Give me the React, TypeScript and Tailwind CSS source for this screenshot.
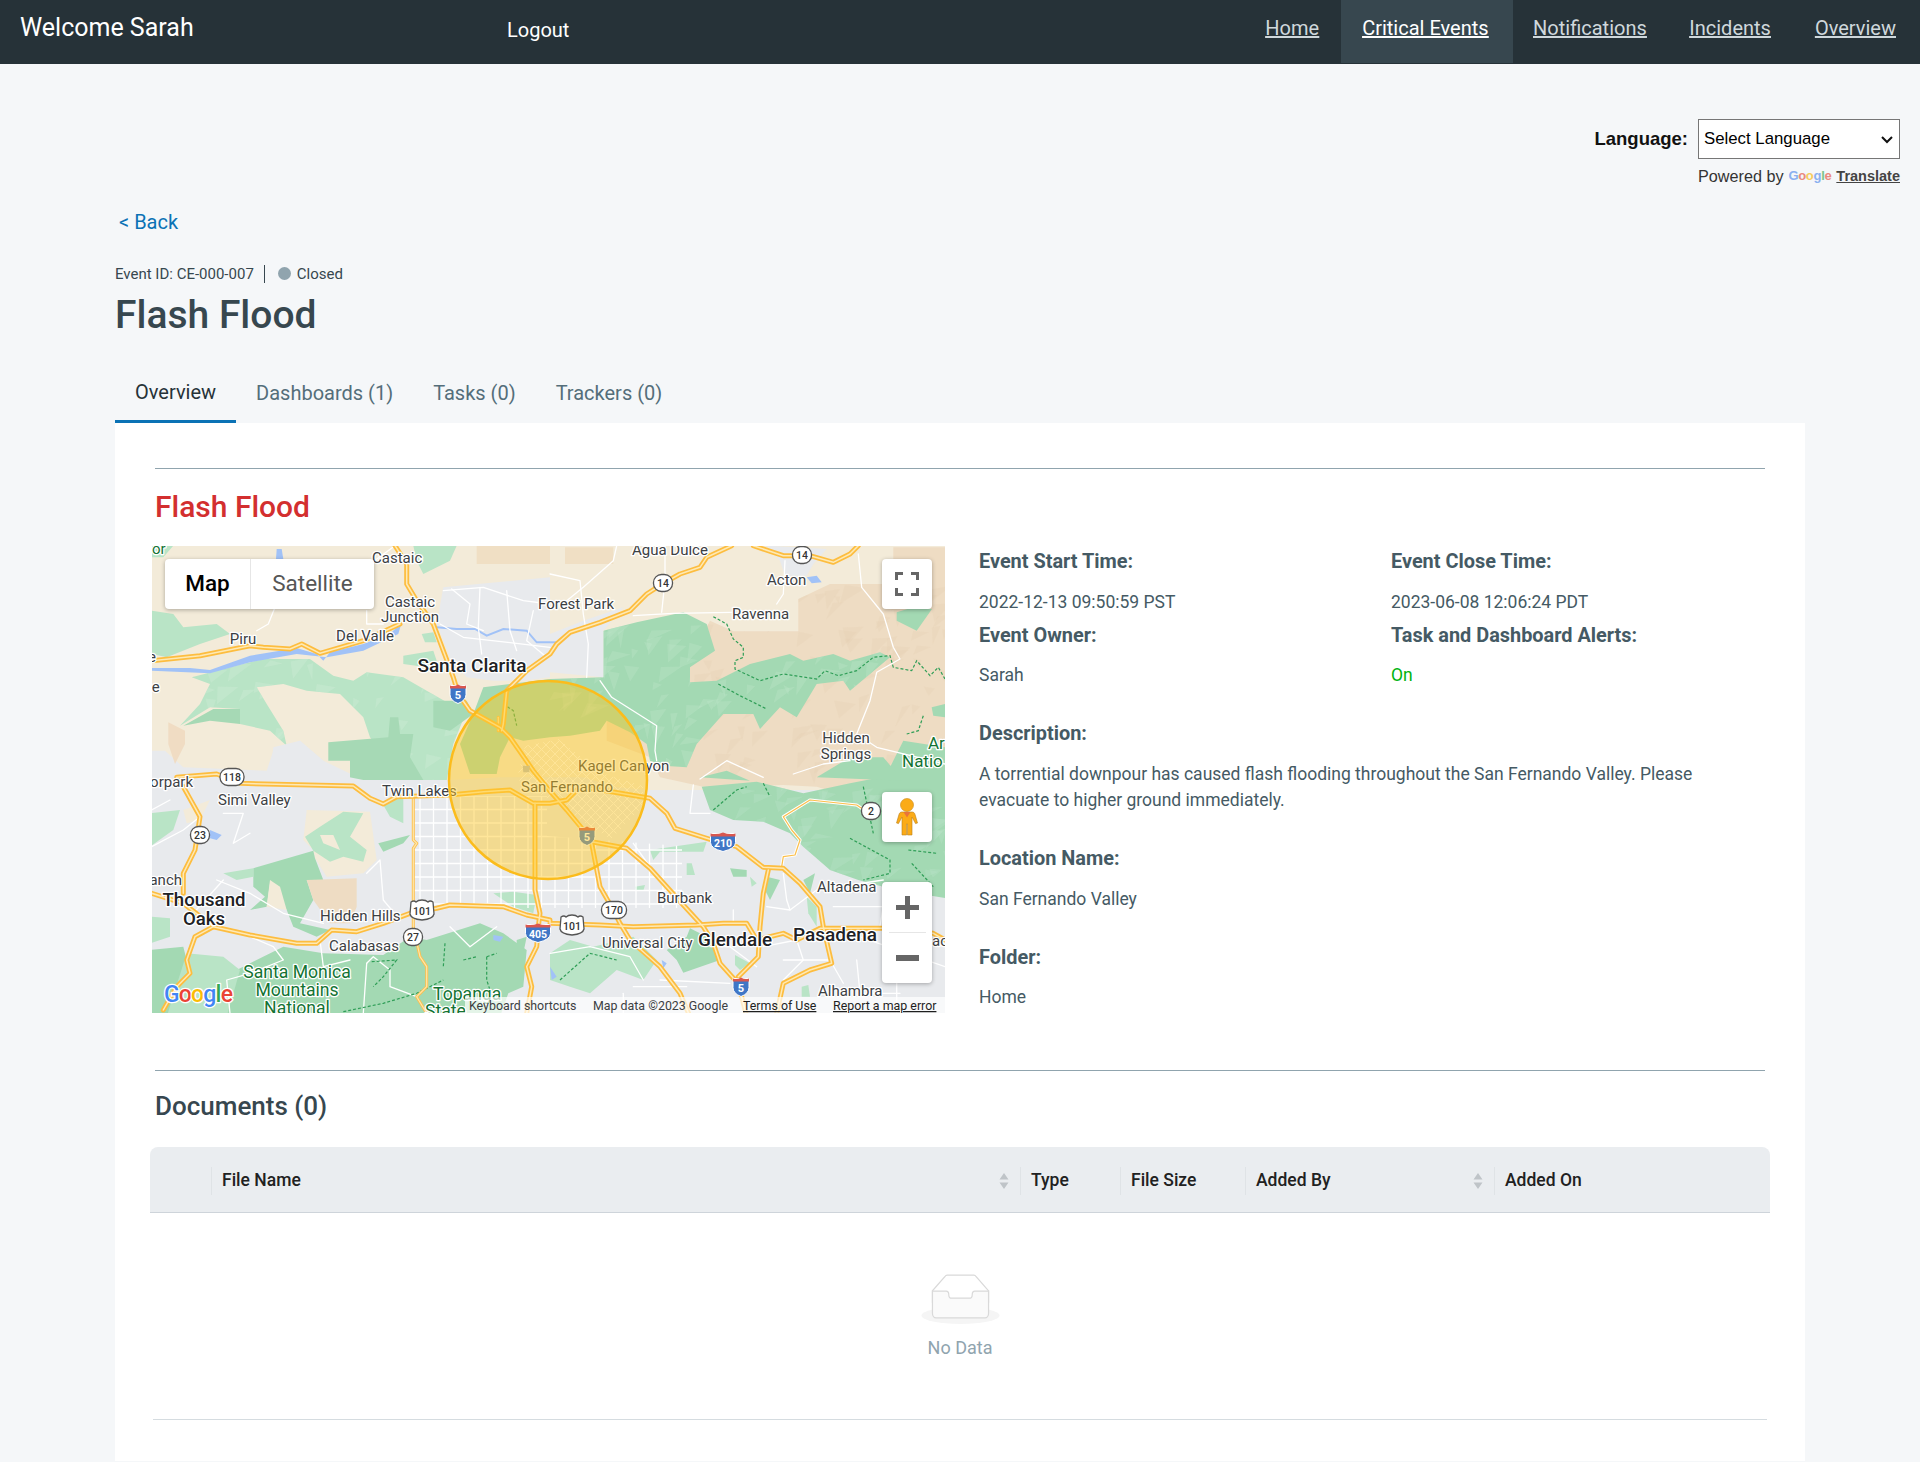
import React from "react";

type N = number[];
const pts = (ox: number, oy: number, n: N): N => n.map((v, i) => v / 3 + (i % 2 ? oy : ox));
const A = (...n: N) => pts(-2, -2, n);
const B = (...n: N) => pts(398, -2, n);
const C = (...n: N) => pts(-2, 234, n);
const D = (...n: N) => pts(398, 234, n);
const S = (n: N) => n.map((v) => v.toFixed(1)).join(" ");

const BEIGE = "#f3ebd9";
const TAN = "#eedcc3";
const GREY = "#e8eaed";
const GREEN = "#a3d9b3";
const LIGHT = "#b9e4c6";
const MID = "#a6d9b5";

const mountain = [
  ...B(160, 260, 260, 235, 400, 205, 470, 240, 495, 320, 420, 370, 420, 415, 500, 410, 600, 360, 720, 330, 760, 350, 850, 330, 900, 350, 990, 325, 1020, 340, 900, 440, 880, 410, 800, 420, 740, 520, 690, 490, 630, 555, 610, 510, 520, 510, 440, 600, 410, 670, 340, 665, 300, 650, 290, 600, 240, 565, 170, 530, 150, 560, 60, 575, 0, 580),
  ...A(1120, 590, 1080, 580, 1050, 640, 1040, 690, 960, 690, 930, 600, 970, 510, 1000, 430),
  ...B(0, 405, 160, 400),
];
const tan = [...B(480, 230, 550, 262, 745, 262, 745, 165, 840, 120, 1030, 120, 1030, 10, 1190, 10, 1190, 800), ...D(900, 50, 800, 20, 700, 15, 550, 20, 460, 20), ...B(330, 700, 300, 640, 170, 590, 170, 530, 420, 500, 400, 380)];
const upperLeft = A(125, 400, 340, 345, 480, 345, 550, 395, 610, 410, 650, 385, 760, 400, 830, 440, 900, 480, 950, 500, 910, 600, 890, 710, 760, 710, 660, 580, 640, 520, 570, 450, 470, 440, 400, 420, 320, 430, 350, 480, 400, 560, 410, 605, 360, 560, 270, 540, 270, 495, 180, 490, 90, 545, 150, 480, 180, 420);
const grey = [...A(0, 620, 45, 620, 100, 670, 350, 680, 370, 620, 450, 590, 520, 650, 640, 708, 900, 708), ...B(-150, 700, 100, 700, 200, 730), ...D(300, 30, 450, 30, 1190, 30, 1190, 710, -1300, 710, -1300, 100)];
const sanGabriel = D(455, 20, 620, 5, 760, 40, 900, 10, 1000, -10, 1190, -10, 1190, 355, 1130, 345, 1000, 320, 925, 300, 840, 270, 760, 200, 720, 160, 640, 125, 550, 120, 480, 90);
const santaMonica = C(260, 570, 400, 500, 520, 520, 700, 525, 780, 470, 830, 480, 990, 430, 1060, 460, 1130, 510, 1120, 620, 1075, 640, 1050, 710, 200, 710, 230, 620);

const patches: [N, string][] = [
  [A(5, 200, 70, 210, 100, 250, 200, 240, 240, 270, 150, 300, 50, 340, 5, 330), LIGHT],
  [A(5, 5, 70, 5, 40, 40, 5, 40), LIGHT],
  [A(790, 5, 920, 5, 900, 50, 820, 90, 800, 50), LIGHT],
  [A(760, 335, 850, 320, 860, 350, 830, 370, 760, 360), LIGHT],
  [A(815, 270, 850, 265, 860, 295, 825, 295), LIGHT],
  [A(1000, 235, 1035, 220, 1030, 245, 1008, 245), LIGHT],
  [A(535, 595, 715, 580, 720, 520, 745, 520, 750, 570, 790, 570, 780, 640, 820, 708, 600, 708, 600, 650, 535, 650), MID],
  [A(850, 470, 950, 470, 970, 510, 900, 560, 850, 550), MID],
  [A(100, 545, 190, 495, 270, 495, 270, 540, 180, 530), MID],
  [A(55, 535, 105, 560, 105, 600, 75, 660, 55, 600), "#f0dcc3"],
  [A(980, 5, 1200, 5, 1200, 60, 980, 60), "#f0dfc4"],
  [B(45, 10, 190, 10, 190, 60, 45, 60), "#f0dfc4"],
  [B(1040, 205, 1090, 190, 1146, 195, 1100, 260, 1040, 230), GREEN],
  [B(1145, 490, 1185, 480, 1185, 520, 1150, 515), GREEN],
  [B(1060, 590, 1185, 610, 1185, 710, 1000, 710), GREEN],
  [B(450, 700, 530, 680, 600, 710), GREEN],
  [B(800, 700, 900, 640, 1000, 640, 1060, 710), GREEN],
  [A(880, 130, 1200, 100, 1200, 400, 1120, 410, 1030, 410, 950, 400, 900, 340, 860, 240), GREY],
  [B(0, 270, 160, 260, 160, 400, 0, 385), GREY],
  [B(220, 190, 160, 260, 0, 300, 0, 270, 100, 230), GREY],
  [B(650, 5, 830, 15, 790, 60, 770, 95, 705, 95, 690, 50), GREY],
  [A(370, 610, 450, 590, 520, 650, 550, 690, 640, 708, 360, 708), GREY],
  [C(470, 90, 660, 95, 680, 240, 640, 280, 530, 290, 495, 235, 490, 210, 460, 180), BEIGE],
  [C(465, 170, 510, 140, 580, 95, 640, 100, 600, 170, 650, 210, 640, 245, 580, 230, 540, 245, 490, 212), LIGHT],
  [C(510, 165, 550, 165, 570, 210, 520, 190), BEIGE],
  [C(310, 265, 490, 212, 495, 235, 520, 300, 470, 300, 490, 360, 450, 430, 540, 450, 500, 470, 430, 440, 410, 390, 360, 310, 350, 380, 300, 390, 345, 350, 310, 320), GREEN],
  [C(220, 280, 310, 265, 310, 290, 260, 300), LIGHT],
  [C(470, 300, 620, 295, 620, 380, 600, 430, 540, 430, 490, 360), TAN],
  [C(360, 300, 390, 320, 410, 390, 350, 380), BEIGE],
  [C(685, 190, 780, 165, 760, 190, 700, 215), GREEN],
  [C(700, 75, 760, 40, 760, 130, 720, 110), LIGHT],
  [C(100, 90, 180, 60, 150, 120, 110, 130), BEIGE],
  [C(0, 100, 90, 90, 70, 150, 0, 200), LIGHT],
  [C(0, 410, 60, 415, 60, 470, 0, 490), LIGHT],
  [C(0, 510, 100, 500, 115, 560, 110, 620, 60, 710, 0, 710), GREEN],
  [C(110, 520, 220, 530, 270, 570, 230, 710, 50, 710), LIGHT],
  [C(1100, 480, 1130, 470, 1120, 520, 1100, 540), GREEN],
  [C(1030, 340, 1090, 335, 1160, 345, 1150, 400, 1090, 380), LIGHT],
  [D(300, 210, 470, 185, 460, 215, 330, 215, 310, 240), LIGHT],
  [D(410, 250, 425, 250, 435, 285, 410, 285), LIGHT],
  [D(540, 265, 590, 270, 590, 290, 550, 290), GREEN],
  [D(600, 290, 620, 310, 605, 320), LIGHT],
  [D(650, 290, 690, 300, 660, 360, 640, 320), GREEN],
  [D(420, 445, 490, 480, 510, 540, 400, 578, 380, 540, 350, 510, 410, 470), GREEN],
  [D(770, 350, 800, 380, 800, 440, 775, 400), LIGHT],
  [D(760, 300, 795, 280, 780, 340), GREEN],
  [D(555, 525, 600, 550, 570, 570, 555, 555), LIGHT],
  [D(255, 320, 285, 315, 280, 332, 258, 332), LIGHT],
  [D(0, 520, 60, 480, 130, 500, 250, 470, 320, 540, 280, 600, 200, 570, 120, 640, 60, 620, 0, 600), LIGHT],
  [D(755, 620, 775, 615, 780, 650, 755, 650), LIGHT],
];

const freeways: N[] = [
  [...A(735, 5, 770, 60, 770, 120, 800, 170, 850, 240, 880, 320, 910, 400, 925, 450, 960, 500, 1050, 550, 1080, 580, 1150, 680, 1190, 730), ...D(50, 90, 100, 150, 125, 185, 230, 205, 300, 265, 400, 375, 460, 440, 490, 490, 510, 550, 555, 600, 575, 650, 590, 710)],
  [...B(545, 5, 470, 40, 450, 70, 390, 90, 340, 118, 290, 150, 240, 200, 150, 235, 60, 265, 20, 300, 0, 330), ...A(1130, 380, 1070, 440, 1060, 540, 1055, 560)],
  B(610, 5, 700, 35, 780, 35, 850, 55, 900, 30, 925, 5),
  A(5, 350, 150, 335, 300, 305, 340, 310, 420, 315, 455, 300, 510, 328, 640, 290, 750, 240),
  [...A(80, 700, 200, 690), ...C(270, 10, 610, 18, 660, 55, 700, 72, 740, 50, 900, 45, 1000, 35, 1080, 30, 1150, 70, 1200, 70), ...D(50, 60, 90, 20, 185, 35, 300, 55, 350, 100, 375, 145, 480, 178, 560, 200, 640, 262, 700, 265, 750, 310, 810, 380, 820, 440, 845, 550, 780, 570, 700, 610, 680, 700)],
  C(1155, 70, 1155, 330, 1170, 400, 1165, 440, 1160, 500, 1130, 560, 1145, 620, 1130, 700),
  [...D(125, 190, 150, 320, 190, 390, 210, 430, 240, 480, 330, 560, 390, 640, 420, 710)],
  [...C(5, 340, 100, 370, 190, 440, 300, 465, 440, 490, 500, 490, 545, 450, 620, 455, 700, 430, 780, 400, 860, 385, 900, 375, 1060, 380, 1130, 405, 1200, 420), ...D(0, 430, 150, 435, 250, 440, 440, 435, 520, 430, 590, 430, 620, 480, 700, 460, 740, 480, 810, 445, 1000, 445, 1150, 460, 1185, 480)],
  [...C(100, 20, 150, 110, 135, 210, 100, 280, 100, 340)],
  C(190, 440, 135, 470, 110, 540, 120, 580, 80, 620, 40, 690),
  [...D(655, 270, 640, 340, 630, 440, 625, 530, 565, 590)],
];

const arterials: N[] = [
  C(790, 50, 790, 180, 800, 190, 790, 205, 790, 440, 810, 530, 830, 560, 830, 620, 800, 650, 830, 700),
  D(695, 260, 700, 230, 735, 225, 750, 180, 725, 150, 700, 110, 780, 60, 920, 75, 950, 95),
  A(1045, 560, 1045, 520),
];

const whites: N[] = [
  A(880, 140, 1000, 130, 1120, 170, 1200, 180),
  A(905, 135, 960, 180, 950, 240, 1000, 260),
  A(990, 130, 985, 250, 995, 330),
  A(1070, 140, 1080, 260, 1100, 320),
  A(1150, 200, 1130, 290, 1190, 340),
  A(870, 240, 940, 280, 1200, 310),
  A(650, 200, 650, 240, 700, 240),
  A(375, 190, 355, 240, 320, 260),
  A(735, 5, 660, 60),
  B(0, 90, 90, 110, 100, 210, 115, 300, 110, 400),
  B(345, 5, 345, 110, 335, 205),
  B(200, 5, 190, 50, 100, 130, 50, 170),
  B(250, 215, 370, 208, 545, 205),
  B(925, 30, 935, 130, 1000, 210, 1030, 310, 1050, 345, 980, 385, 960, 470, 920, 570, 980, 610, 1185, 660),
  B(705, 50, 700, 150, 680, 180),
  B(150, 410, 185, 460, 280, 520, 320, 545, 315, 620, 320, 650),
  B(450, 705, 530, 650, 640, 700),
  B(730, 690, 820, 660, 900, 650),
  C(5, 90, 60, 60),
  C(5, 200, 100, 150, 150, 110),
  C(220, 100, 280, 100, 250, 190, 300, 160),
  C(200, 300, 300, 340, 400, 400, 520, 430),
  C(650, 280, 690, 240, 700, 360, 750, 420),
  C(130, 400, 220, 300),
  C(300, 470, 370, 500, 400, 540, 300, 580, 230, 600, 240, 700),
  C(510, 480, 520, 560, 600, 540),
  C(650, 550, 670, 530, 720, 570, 720, 620, 800, 650),
  C(650, 550, 640, 700),
  C(900, 440, 960, 500, 1040, 440),
  D(430, 15, 420, 100, 480, 100),
  D(250, 190, 350, 330, 400, 380),
  D(550, 390, 550, 430),
  D(700, 280, 710, 360, 720, 390, 650, 380),
  D(720, 390, 800, 330, 1000, 300),
  D(850, 380, 1000, 380, 990, 440),
  D(640, 500, 740, 480, 760, 540, 700, 600),
  D(480, 500, 540, 500, 620, 560),
  D(700, 540, 840, 540, 880, 610),
  D(0, 520, 120, 500, 240, 530, 280, 600),
  D(900, 460, 1185, 560),
  D(920, 540, 930, 640, 1050, 640),
  D(1040, 600, 1040, 710),
  D(330, 600, 540, 610),
  D(220, 640, 220, 710),
  D(250, 620, 410, 620),
];

const trails: N[] = [
  B(490, 218, 530, 240, 550, 285, 580, 310, 580, 340, 555, 350, 555, 375, 630, 410, 700, 390, 800, 405, 825, 380, 865, 395, 920, 380, 970, 340, 1020, 335, 1030, 370, 1085, 380, 1100, 350, 1140, 395, 1165, 370, 1185, 405),
  B(505, 420, 570, 455, 650, 495),
  B(1120, 515, 1105, 560, 1070, 570),
  A(1060, 480, 1090, 500, 1100, 545),
  C(665, 545, 740, 540, 700, 590, 670, 620),
  C(580, 695, 700, 670, 800, 640, 880, 600),
  C(1010, 530, 1040, 520),
  C(1010, 530, 1010, 600, 1030, 660),
  C(940, 540, 980, 530),
  C(885, 490, 880, 560),
  D(490, 90, 560, 30, 590, 20),
  D(640, 10, 660, 50),
  D(900, 175, 1020, 240, 1020, 280, 940, 300),
  D(1085, 250, 1150, 320),
  D(940, 20, 970, 160),
  D(30, 600, 120, 520, 200, 540),
  D(1075, 210, 1160, 220),
];

const grid: React.ReactElement[] = [];
for (let x = 268; x <= 530; x += 13.5) grid.push(<line key={"v" + x} x1={x} y1={250} x2={x} y2={362} />);
for (let y = 250; y <= 362; y += 13.5) grid.push(<line key={"h" + y} x1={262} y1={y} x2={530} y2={y} />);
const diag: React.ReactElement[] = [];
for (let k = 0; k <= 30; k++) {
  const c = 340 + k * 9;
  diag.push(<line key={"a" + k} x1={c} y1={190} x2={c + 130} y2={320} />);
  diag.push(<line key={"b" + k} x1={c} y1={190} x2={c - 130} y2={320} />);
}

function triangles(seed: number, x0: number, y0: number, w: number, h: number, count: number, fill: string, opacity: number) {
  let s = seed;
  const r = () => {
    s = (s * 16807) % 2147483647;
    return (s % 10000) / 10000;
  };
  const out: React.ReactElement[] = [];
  for (let i = 0; i < count; i++) {
    const x = x0 + r() * w;
    const y = y0 + r() * h;
    const d = `${x},${y} ${x + 6 + r() * 16},${y + r() * 8 - 4} ${x + r() * 14 - 7},${y + 6 + r() * 14}`;
    out.push(<polygon key={i} points={d} fill={fill} opacity={opacity} />);
  }
  return out;
}

function Interstate({ x, y, w, label, fs = 10 }: { x: number; y: number; w: number; label: string; fs?: number }) {
  const h = 19;
  const l = x - w / 2;
  const t = y - h / 2;
  return (
    <g>
      <path d={`M${l} ${t + 1} L${l + w} ${t + 1} L${l + w} ${t + 10} Q${l + w} ${t + 16} ${x} ${t + h} Q${l} ${t + 16} ${l} ${t + 10} Z`} fill="#3f76c6" stroke="#fff" strokeWidth="1" />
      <path d={`M${l} ${t + 1} q${w / 4} 1.5 ${w / 2} -1 q${w / 4} 2.5 ${w / 2} 1 L${l + w} ${t + 4} L${l} ${t + 4} Z`} fill="#d9574f" />
      <text x={x} y={t + 14} textAnchor="middle" fontSize={fs} fontWeight="700" fill="#fff" fontFamily="Roboto, sans-serif">{label}</text>
    </g>
  );
}

function StateShield({ x, y, w, label }: { x: number; y: number; w: number; label: string }) {
  return (
    <g>
      <rect x={x - w / 2} y={y - 8.5} width={w} height={17} rx={8} fill="#fff" stroke="#555" strokeWidth="1.3" />
      <text x={x} y={y + 4} textAnchor="middle" fontSize="10.5" fontWeight="500" fill="#333" fontFamily="Roboto, sans-serif">{label}</text>
    </g>
  );
}

function UsShield({ x, y, label }: { x: number; y: number; label: string }) {
  return (
    <g>
      <path d={`M${x - 11} ${y - 8} q3 -2 5 0 q2 -2 6 -2 q4 0 6 2 q2 -2 5 0 L${x + 12} ${y + 4} Q${x + 11} ${y + 9} ${x} ${y + 10} Q${x - 11} ${y + 9} ${x - 12} ${y + 4} Z`} fill="#fff" stroke="#555" strokeWidth="1.3" />
      <text x={x} y={y + 5} textAnchor="middle" fontSize="10.5" fontWeight="500" fill="#333" fontFamily="Roboto, sans-serif">{label}</text>
    </g>
  );
}

type L = [string, number, number, ("start" | "middle" | "end")?, number?, number?, string?];
const labels: L[] = [
  ["or", 0, 8, "start", 15, 400, "#137333"],
  ["Castaic", 220, 17],
  ["Castaic", 258, 61, "middle"],
  ["Junction", 258, 76, "middle"],
  ["Piru", 91, 98, "middle"],
  ["Del Valle", 213, 95, "middle"],
  ["Santa Clarita", 320, 126, "middle", 19, 500, "#202124"],
  ["e", -4, 116],
  ["le", -4, 146],
  ["Forest Park", 386, 63],
  ["Agua Dulce", 480, 9],
  ["Acton", 615, 39],
  ["Ravenna", 580, 73],
  ["Hidden", 694, 197, "middle"],
  ["Springs", 694, 213, "middle"],
  ["Ar", 776, 203, "start", 17, 400, "#137333"],
  ["Natio", 750, 221, "start", 17, 400, "#137333"],
  ["Kagel Canyon", 426, 225],
  ["San Fernando", 369, 246],
  ["Twin Lakes", 230, 250],
  ["Simi Valley", 66, 259],
  ["orpark", 41, 241, "end"],
  ["anch", 30, 339, "end"],
  ["Thousand", 52, 360, "middle", 18.6, 500, "#202124"],
  ["Oaks", 52, 379, "middle", 18.6, 500, "#202124"],
  ["Hidden Hills", 168, 375],
  ["Calabasas", 177, 405],
  ["Santa Monica", 145, 432, "middle", 17.6, 400, "#137333"],
  ["Mountains", 145, 450, "middle", 17.6, 400, "#137333"],
  ["National", 145, 468, "middle", 17.6, 400, "#137333"],
  ["Topanga", 281, 454, "start", 17.6, 400, "#137333"],
  ["State", 273, 471, "start", 17.6, 400, "#137333"],
  ["Burbank", 505, 357],
  ["Universal City", 450, 402],
  ["Glendale", 546, 400, "start", 18.9, 500, "#202124"],
  ["Pasadena", 641, 395, "start", 19, 500, "#202124"],
  ["Altadena", 665, 346],
  ["Alhambra", 666, 450],
  ["ac", 780, 400],
];

function MapDrawing() {
  return (
    <svg viewBox="0 0 793 467" width="793" height="467" className="block" style={{ fontFamily: "Roboto, sans-serif" }}>
      <defs>
        <clipPath id="mt"><polygon points={S(mountain)} /></clipPath>
        <clipPath id="sg"><polygon points={S(sanGabriel)} /></clipPath>
        <clipPath id="tn"><polygon points={S(tan)} /></clipPath>
        <clipPath id="ul"><polygon points={S(upperLeft)} /></clipPath>
        <clipPath id="valley"><polygon points="373,200 407,193 449,227 491,240 491,260 459,293 433,277 365,233" /></clipPath>
        <clipPath id="cityGrid"><polygon points="262,250 395,250 395,290 530,300 530,362 262,362" /></clipPath>
      </defs>
      <rect width="793" height="467" fill={BEIGE} />
      <polygon points={S(tan)} fill={TAN} />
      <g clipPath="url(#tn)">{triangles(7, 540, 30, 253, 230, 90, "#dfc7a8", 0.16)}</g>
      <polygon points={S(upperLeft)} fill={LIGHT} />
      <g clipPath="url(#ul)">{triangles(31, 30, 110, 320, 130, 70, "#cdebd5", 0.4)}</g>
      <polygon points={S(mountain)} fill={GREEN} />
      <g clipPath="url(#mt)">{triangles(11, 400, 70, 340, 160, 130, "#bce5c9", 0.35)}</g>
      <polygon points={S(grey)} fill={GREY} />
      <polygon points={S(sanGabriel)} fill={GREEN} />
      <g clipPath="url(#sg)">{triangles(53, 548, 234, 245, 120, 70, "#bce5c9", 0.3)}</g>
      <polygon points={S(santaMonica)} fill={GREEN} />
      {patches.map(([p, f], i) => (<polygon key={i} points={S(p)} fill={f} />))}

      <polygon points={S(A(5, 372, 120, 372, 180, 378, 300, 335, 440, 312, 500, 330, 520, 350, 540, 325, 640, 300, 720, 270, 755, 235, 745, 270, 640, 320, 530, 340, 440, 330, 300, 355, 180, 388, 5, 380))} fill="#a1c2f7" />
      <polyline points={S(A(860, 250, 920, 255, 975, 255, 1010, 275, 1060, 255, 1130, 260, 1160, 295, 1200, 295))} fill="none" stroke="#a1c2f7" strokeWidth="2" />
      <polyline points={S(B(0, 295, 30, 295))} fill="none" stroke="#a1c2f7" strokeWidth="2" />
      <polygon points={S(B(770, 100, 800, 95, 815, 115, 785, 118))} fill="#a1c2f7" />
      <polygon points={S(A(380, 15, 395, 15, 400, 45, 378, 45))} fill="#a1c2f7" />
      <polygon points={S(C(180, 150, 215, 165, 200, 180, 180, 175))} fill="#a1c2f7" />
      <polygon points={S(D(335, 540, 350, 550, 340, 565))} fill="#a1c2f7" />
      <polygon points={S(D(0, 560, 20, 590, 5, 600))} fill="#a1c2f7" />
      <polygon points={S(C(1030, 465, 1060, 470, 1050, 485, 1030, 480))} fill="#a1c2f7" />

      <g stroke="#fff" strokeWidth="1.3" clipPath="url(#cityGrid)">{grid}</g>
      <g stroke="#fff" strokeWidth="1" opacity="0.85" clipPath="url(#valley)">{diag}</g>
      <g fill="none" stroke="#fff" strokeWidth="1.3" strokeLinejoin="round" strokeLinecap="round">
        {whites.map((r, i) => (<polyline key={i} points={S(r)} />))}
      </g>
      <g fill="none" stroke="#2f9e57" strokeWidth="1.2" strokeDasharray="3 2">
        {trails.map((r, i) => (<polyline key={i} points={S(r)} />))}
      </g>
      <g fill="none" strokeLinejoin="round" strokeLinecap="round">
        {arterials.map((r, i) => (<polyline key={i} points={S(r)} stroke={i === 1 ? "#fff" : "#fdc04f"} strokeWidth={i === 1 ? 3.2 : 3} />))}
        {arterials.map((r, i) => (<polyline key={i} points={S(r)} stroke={i === 1 ? "#fbbf4b" : "#fee7ab"} strokeWidth={1.2} />))}
        {freeways.map((r, i) => (<polyline key={i} points={S(r)} stroke="#fdbd3f" strokeWidth="5" />))}
        {freeways.map((r, i) => (<polyline key={i} points={S(r)} stroke="#fee9b4" strokeWidth="1.5" />))}
      </g>
      <polygon points={S(A(1118, 665, 1140, 665, 1138, 685, 1120, 685))} fill="#b9bcbd" />

      <g fontSize="15" fill="#3c4043" stroke="#fff" strokeWidth="2.6" strokeLinejoin="round" style={{ paintOrder: "stroke" }}>
        {labels.map(([t, x, y, a, fs, w, c], i) => (
          <text key={i} x={x} y={y} textAnchor={a ?? "start"} fontSize={fs ?? 15} fontWeight={w ?? 400} fill={c ?? "#3c4043"}>{t}</text>
        ))}
      </g>

      <Interstate x={306} y={148} w={16} label="5" fs={11} />
      <Interstate x={435} y={290} w={16} label="5" fs={11} />
      <Interstate x={571} y={296} w={25} label="210" fs={10.5} />
      <Interstate x={589} y={441} w={16} label="5" fs={11} />
      <Interstate x={386} y={387} w={25} label="405" fs={10.5} />
      <StateShield x={80} y={231} w={24} label="118" />
      <StateShield x={48} y={289} w={19} label="23" />
      <StateShield x={261} y={391} w={19} label="27" />
      <StateShield x={462} y={364} w={25} label="170" />
      <StateShield x={511} y={37} w={19} label="14" />
      <StateShield x={650} y={9} w={19} label="14" />
      <StateShield x={719} y={265} w={19} label="2" />
      <UsShield x={270} y={364} label="101" />
      <UsShield x={420} y={379} label="101" />

      <circle cx="396" cy="234" r="99" fill="#ffc81e" fillOpacity="0.45" stroke="#fbbc1c" strokeWidth="2.5" />

      <rect x="313" y="451" width="480" height="16" fill="#fff" fillOpacity="0.7" />
      <g fontSize="12.4" fill="#1f1f1f">
        <text x="317" y="464" fill="#3c4043">Keyboard shortcuts</text>
        <text x="441" y="464" fill="#3c4043">Map data ©2023 Google</text>
        <text x="591" y="464" textDecoration="underline">Terms of Use</text>
        <text x="681" y="464" textDecoration="underline">Report a map error</text>
      </g>
      <text x="12" y="456" fontSize="23" fontWeight="500" stroke="#fff" strokeWidth="2.5" strokeLinejoin="round" style={{ paintOrder: "stroke" }} textLength="69" lengthAdjust="spacing">
        <tspan fill="#4285f4">G</tspan><tspan fill="#ea4335">o</tspan><tspan fill="#fbbc05">o</tspan><tspan fill="#4285f4">g</tspan><tspan fill="#34a853">l</tspan><tspan fill="#ea4335">e</tspan>
      </text>
    </svg>
  );
}

const ctrlShadow = "shadow-[0_1px_4px_rgba(0,0,0,0.3)]";

function MapBlock() {
  return (
    <div className="relative h-[467px] w-[793px] shrink-0 overflow-hidden">
      <MapDrawing />
      <div className={`absolute left-[13px] top-[13px] flex h-[50px] w-[209px] rounded-sm bg-white text-[22.500px] ${ctrlShadow}`}>
        <div className="flex w-[86px] items-center justify-center border-r border-[#e6e6e6] font-medium text-black">Map</div>
        <div className="flex flex-1 items-center justify-center text-[#565656]">Satellite</div>
      </div>
      <div className={`absolute left-[730px] top-[13px] flex h-[50px] w-[50px] items-center justify-center rounded-sm bg-white ${ctrlShadow}`}>
        <svg width="24" height="24" viewBox="0 0 24 24" fill="none" stroke="#666" strokeWidth="3">
          <path d="M1.5 8V1.5H8M16 1.5h6.5V8M22.5 16v6.5H16M8 22.5H1.5V16" />
        </svg>
      </div>
      <div className={`absolute left-[730px] top-[246px] flex h-[50px] w-[50px] items-center justify-center rounded-sm bg-white ${ctrlShadow}`}>
        <svg width="22" height="38" viewBox="0 0 22 38">
          <circle cx="11" cy="7" r="6.5" fill="#fbab17" stroke="#c98a1a" strokeWidth="0.6" />
          <path d="M6 14h10c1.500 0 2.500 .8 3 2.400L21.500 25l-2 .6L16 19V37h-4.500V26h-1v11H6V19l-3.500 6.600-2-.6L3 16.400C3.500 14.800 4.500 14 6 14z" fill="#fbab17" stroke="#b9801a" strokeWidth="0.6" />
          <path d="M7.500 14h7L11 19.500z" fill="#e8743b" />
        </svg>
      </div>
      <div className={`absolute left-[730px] top-[336px] flex h-[101px] w-[50px] flex-col items-center rounded-sm bg-white ${ctrlShadow}`}>
        <div className="flex h-[50px] w-full items-center justify-center">
          <svg width="23" height="23" viewBox="0 0 23 23"><path d="M0 9h9V0h5v9h9v5h-9v9H9v-9H0z" fill="#666" /></svg>
        </div>
        <div className="h-px w-[37px] bg-[#e6e6e6]" />
        <div className="flex h-[50px] w-full items-center justify-center">
          <div className="h-[6px] w-[23px] bg-[#666]" />
        </div>
      </div>
    </div>
  );
}

function Field({ label, value, valueClass = "text-[#455a64]" }: { label: string; value: string; valueClass?: string }) {
  return (
    <div>
      <div className="text-[19.900px] font-bold leading-[28px] text-[#455a64]">{label}</div>
      <div className={`mt-[12.500px] text-[17.500px] leading-[26px] ${valueClass}`}>{value}</div>
    </div>
  );
}

function Sorter() {
  return (
    <svg width="10" height="16" viewBox="0 0 10 16" className="absolute right-[11px] top-[6px]" fill="#bfc4c8">
      <path d="M5 0l4.500 6.500h-9zM5 16l-4.500-6.500h9z" />
    </svg>
  );
}

function HeadCell({ label, sort, first }: { label: string; sort?: boolean; first?: boolean }) {
  return (
    <div className={`relative flex h-[28px] items-center pl-[10px] text-[17.500px] font-medium text-[#212121] ${first ? "" : "border-l border-[#dfe3e6]"}`}>
      {label}
      {sort && <Sorter />}
    </div>
  );
}

export default function App() {
  return (
    <div className="min-h-[1462px] bg-[#f5f7f9] font-['Roboto',sans-serif]">
      <header className="flex h-[64px] items-start bg-[#263238]">
        <div className="w-[507px] pl-[20px] pt-[11px] text-[25px] leading-[34px] text-white">Welcome Sarah</div>
        <a className="pt-[16px] text-[20px] leading-[28px] text-white">Logout</a>
        <nav className="ml-auto flex h-[63px] pr-[2px] text-[20px] text-[#cfd8dc] underline">
          <a className="px-[22px] pt-[14px] leading-[28px]">Home</a>
          <a className="bg-[#37474f] pl-[21px] pr-[24px] pt-[14px] leading-[28px] text-white">Critical Events</a>
          <a className="px-[20.500px] pt-[14px] leading-[28px]">Notifications</a>
          <a className="px-[22px] pt-[14px] leading-[28px]">Incidents</a>
          <a className="px-[22px] pt-[14px] leading-[28px]">Overview</a>
        </nav>
      </header>

      <div className="flex flex-col items-end pr-[20px] pt-[55px] font-['Liberation_Sans',sans-serif]">
        <div className="flex items-center">
          <span className="mr-[10px] text-[18.500px] font-bold text-[#111]">Language:</span>
          <div className="relative">
            <select className="block h-[40px] w-[202px] appearance-none border border-[#767676] bg-white pl-[5px] text-[16.800px] text-black">
              <option>Select Language</option>
            </select>
            <svg width="12" height="8" viewBox="0 0 12 8" className="pointer-events-none absolute right-[7px] top-[17px]" fill="none" stroke="#111" strokeWidth="2">
              <path d="M1 1l5 5 5-5" />
            </svg>
          </div>
        </div>
        <div className="mt-[7px] flex w-[202px] items-center justify-between whitespace-nowrap text-[16.200px] leading-[20px] text-[#333]">
          <span>Powered by</span>
          <span className="text-[13px] font-bold tracking-[-0.3px]"><span className="text-[#8ab0f0]">G</span><span className="text-[#ea8a80]">o</span><span className="text-[#f5cc60]">o</span><span className="text-[#8ab0f0]">g</span><span className="text-[#7cc48c]">l</span><span className="text-[#ea8a80]">e</span></span>
          <span className="text-[14.500px] font-bold text-[#444] underline">Translate</span>
        </div>
      </div>

      <main className="px-[115px]">
        <a className="ml-[4px] mt-[22px] block text-[20px] leading-[28px] text-[#0b72b5]">&lt; Back</a>
        <div className="mt-[28px] flex h-[20px] items-center text-[15px] text-[#37474f]">
          <span>Event ID: CE-000-007</span>
          <span className="mx-[10px] h-[18px] w-px bg-[#37474f]" />
          <span className="mr-[6px] ml-[3px] -mt-[1px] h-[13px] w-[13px] rounded-full bg-[#90a4ae]" />
          <span>Closed</span>
        </div>
        <h1 className="mt-[7px] text-[39px] font-medium leading-[48px] text-[#37474f]">Flash Flood</h1>
        <div className="mt-[35px] flex h-[71px] w-[1690px] text-[20px] text-[#546e7a]">
          <div className="h-[49px] border-b-[3px] border-[#0b72b5] px-[20px] pt-[4px] leading-[28px] text-[#263238]">Overview</div>
          <div className="px-[20px] pt-[5px] leading-[28px]">Dashboards (1)</div>
          <div className="px-[20px] pt-[5px] leading-[28px]">Tasks (0)</div>
          <div className="px-[20px] pt-[5px] leading-[28px]">Trackers (0)</div>
        </div>

        <section className="-mt-[22px] w-[1690px] bg-white px-[40px] pb-[41px] pt-[45px]">
          <div className="h-[1px] bg-[#90a4ae]" />
          <h2 className="mt-[18px] text-[30px] font-medium leading-[40px] text-[#d32f2f]">Flash Flood</h2>
          <div className="-ml-[3px] mt-[19px] flex">
            <MapBlock />
            <div className="ml-[34px] flex-1 pt-[2px]">
              <div className="grid grid-cols-[412px_1fr]">
                <Field label="Event Start Time:" value="2022-12-13 09:50:59 PST" />
                <Field label="Event Close Time:" value="2023-06-08 12:06:24 PDT" />
                <div className="mt-[7px]"><Field label="Event Owner:" value="Sarah" /></div>
                <div className="mt-[7px]"><Field label="Task and Dashboard Alerts:" value="On" valueClass="text-[#00b30f]" /></div>
              </div>
              <div className="mt-[32px]">
                <div className="text-[19.900px] font-bold leading-[28px] text-[#455a64]">Description:</div>
                <p className="mt-[13px] w-[760px] text-[17.500px] leading-[26px] text-[#455a64]">A torrential downpour has caused flash flooding throughout the San Fernando Valley. Please evacuate to higher ground immediately.</p>
              </div>
              <div className="mt-[32px]"><Field label="Location Name:" value="San Fernando Valley" /></div>
              <div className="mt-[32px]"><Field label="Folder:" value="Home" /></div>
            </div>
          </div>

          <div className="mt-[57px] h-[1px] bg-[#90a4ae]" />
          <h3 className="mt-[17px] text-[26px] font-medium leading-[36px] text-[#37474f]">Documents (0)</h3>
          <div className="-mx-[5px] mt-[23px]">
            <div className="grid h-[66px] grid-cols-[61px_809px_100px_125px_249px_1fr] items-center rounded-t-lg border-b border-[#ced4da] bg-[#eaedf0] pt-[2px]">
              <div />
              <HeadCell label="File Name" sort />
              <HeadCell label="Type" />
              <HeadCell label="File Size" />
              <HeadCell label="Added By" sort />
              <HeadCell label="Added On" />
            </div>
            <div className="mx-[3px] flex h-[207px] flex-col items-center border-b border-[#d5dce0] pt-[61px]">
              <svg width="79" height="50" viewBox="0 0 64 41">
                <g transform="translate(0 1)" fill="none" fillRule="evenodd">
                  <ellipse fill="#f5f5f5" cx="32" cy="33" rx="32" ry="7" />
                  <g fillRule="nonzero" stroke="#d9d9d9">
                    <path d="M55 12.76L44.854 1.258C44.367.474 43.656 0 42.907 0H21.093c-.749 0-1.46.474-1.947 1.257L9 12.761V22h46v-9.24z" />
                    <path d="M41.613 15.931c0-1.605.994-2.93 2.227-2.931H55v18.137C55 33.26 53.68 35 52.05 35h-40.1C10.32 35 9 33.259 9 31.137V13h11.16c1.233 0 2.227 1.323 2.227 2.928v.022c0 1.605 1.005 2.901 2.237 2.901h14.752c1.232 0 2.237-1.308 2.237-2.913v-.007z" fill="#fafafa" />
                  </g>
                </g>
              </svg>
              <div className="mt-[11px] text-[18px] leading-[26px] text-[#90a4ae]">No Data</div>
            </div>
          </div>
        </section>
      </main>
    </div>
  );
}
